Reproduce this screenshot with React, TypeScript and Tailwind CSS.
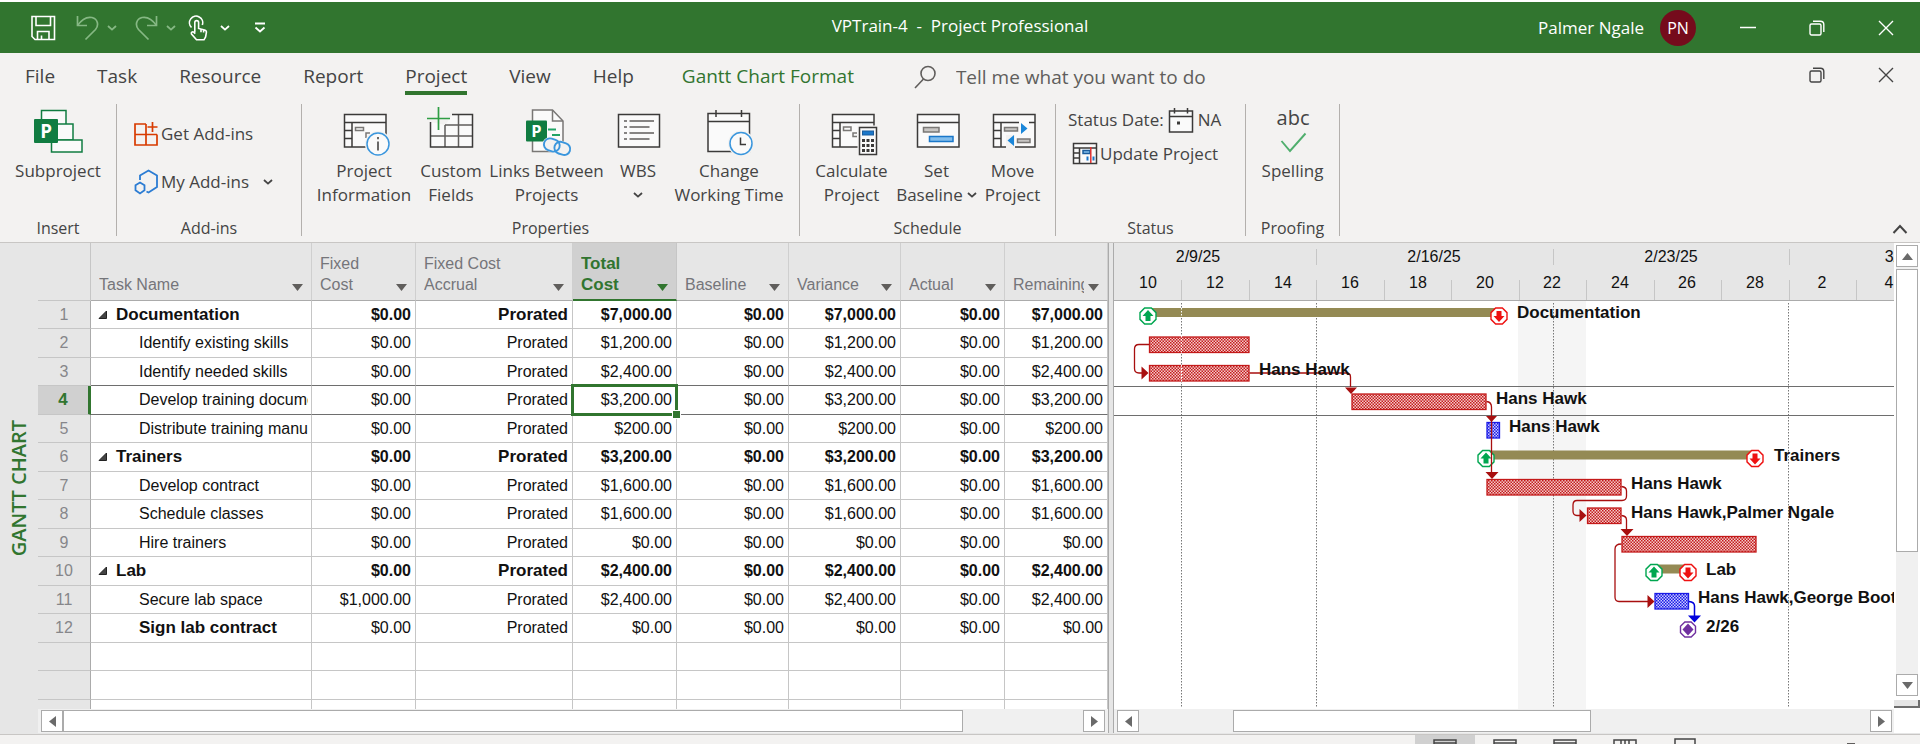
import React from "react";

const ROW = 28.5;
const ORIGIN = 1114;

/* ---------- shared small pieces ---------- */

function Chevron({ className = "" }: { className?: string }) {
  return (
    <svg width="10" height="6" viewBox="0 0 10 6" className={className} aria-hidden="true">
      <path d="M1 1l4 3.6L9 1" fill="none" stroke="currentColor" strokeWidth="1.8" />
    </svg>
  );
}

function Restore() {
  return (
    <svg width="16" height="16" viewBox="0 0 16 16" fill="none" stroke="currentColor" strokeWidth="1.4" aria-hidden="true">
      <rect x="1" y="4" width="11" height="11" rx="1.5" />
      <path d="M4 1.2h7.5a3.3 3.3 0 0 1 3.3 3.3V12" />
    </svg>
  );
}

function Close() {
  return (
    <svg width="16" height="16" viewBox="0 0 16 16" stroke="currentColor" strokeWidth="1.4" aria-hidden="true">
      <path d="M1 1l14 14M15 1L1 15" />
    </svg>
  );
}

/* ---------- title bar ---------- */

function TitleBar() {
  return (
    <header className="grid h-[53px] grid-cols-[1fr_auto_1fr] items-center border-t-2 border-white bg-[#31752f] text-white">
      <div className="flex items-center pl-[30px]">
        <button aria-label="Save" className="mr-5">
          <svg width="26" height="26" viewBox="0 0 26 26" fill="none" stroke="currentColor" strokeWidth="1.6">
            <path d="M2 1.5h22.5v23H5l-3-3z" />
            <path d="M6 1.5v9h14.500v-9M7.500 24.500v-8h11.500v8M11.500 20.500v4" />
          </svg>
        </button>
        <button aria-label="Undo" className="mr-2 text-[#86b884]">
          <svg width="23" height="26" viewBox="0 0 23 26" fill="none" stroke="currentColor" strokeWidth="1.7">
            <path d="M1.500 1v9.500H11" />
            <path d="M1.500 10.500C6 4 11 1.500 16 2.500c6 1.500 7 8 3.500 12L9.500 24.500" />
          </svg>
        </button>
        <button aria-label="Undo options" className="mr-[18px] text-[#86b884]">
          <Chevron />
        </button>
        <button aria-label="Redo" className="mr-2 text-[#86b884]">
          <svg width="23" height="26" viewBox="0 0 23 26" fill="none" stroke="currentColor" strokeWidth="1.7">
            <path d="M21.500 1v9.500H12" />
            <path d="M21.500 10.500C17 4 12 1.500 7 2.500c-6 1.500-7 8-3.500 12L13.500 24.500" />
          </svg>
        </button>
        <button aria-label="Redo options" className="mr-3 text-[#86b884]">
          <Chevron />
        </button>
        <button aria-label="Touch mode" className="mr-3">
          <svg width="20" height="26" viewBox="0 0 20 26" fill="none" stroke="currentColor" strokeWidth="1.600">
            <path d="M3.500 12.500A6.600 6.600 0 1 1 14.300 10" />
            <path d="M6.800 17.500V7.500a1.900 1.900 0 0 1 3.800 0v6l6 1.500c1.400.4 2 1 1.800 2.500l-.8 4.500-1.600 2.800H8.500L3.500 19c-.8-1.500 1-2.800 2.200-1.800l1.500 1.500M13 14.200v3M15.600 15v2.600" />
          </svg>
        </button>
        <button aria-label="Touch mode options" className="mr-6">
          <Chevron />
        </button>
        <button aria-label="Customize quick access toolbar">
          <svg width="12" height="12" viewBox="0 0 12 12" fill="none" stroke="currentColor" strokeWidth="1.8">
            <path d="M1 1.500h10M1.500 5.500L6 9.500l4.500-4" />
          </svg>
        </button>
      </div>
      <h1 className="pb-1 text-[17px] leading-6 whitespace-pre">{"VPTrain-4  -  Project Professional"}</h1>
      <div className="flex items-center justify-end pr-[26px]">
        <span className="mr-4 text-[17px]">Palmer Ngale</span>
        <span className="mr-11 flex size-9 items-center justify-center rounded-full bg-[#750b1c] text-base">PN</span>
        <button aria-label="Minimize" className="mr-[53px]">
          <svg width="16" height="16" viewBox="0 0 16 16" stroke="currentColor" strokeWidth="1.500">
            <path d="M0 7.500h16" />
          </svg>
        </button>
        <button aria-label="Restore" className="mr-[53px]">
          <Restore />
        </button>
        <button aria-label="Close">
          <Close />
        </button>
      </div>
    </header>
  );
}

/* ---------- ribbon tabs ---------- */

const tabs = ["File", "Task", "Resource", "Report", "Project", "View", "Help"];

function RibbonTabs() {
  return (
    <nav className="flex h-[47px] items-center text-[19px] leading-7 text-[#444]">
      <div className="flex items-start gap-[42px] self-start pl-[25px]">
        {tabs.map((t) => (
          <button
            key={t}
            className={
              t === "Project"
                ? "flex h-[42px] flex-col border-b-4 border-[#31752f] pt-[9px] font-medium"
                : "flex h-[42px] flex-col border-b-4 border-transparent pt-[9px]"
            }
          >
            {t}
          </button>
        ))}
        <button className="flex h-[42px] flex-col border-b-4 border-transparent pt-[9px] pl-1.5 text-[#31752f]">Gantt Chart Format</button>
      </div>
      <label className="ml-[60px] flex items-center gap-5 text-[#605e5c]">
        <svg width="22" height="24" viewBox="0 0 22 24" fill="none" stroke="currentColor" strokeWidth="1.600" aria-hidden="true">
          <circle cx="14" cy="8.500" r="7" />
          <path d="M9.500 14L1 23" />
        </svg>
        <input
          aria-label="Tell me what you want to do"
          placeholder="Tell me what you want to do"
          className="w-72 bg-transparent outline-none placeholder:text-[#605e5c]"
        />
      </label>
      <div className="ml-auto flex items-center gap-[53px] pr-[26px] pb-1 text-[#444]">
        <button aria-label="Restore document window">
          <Restore />
        </button>
        <button aria-label="Close document window">
          <Close />
        </button>
      </div>
    </nav>
  );
}

/* ---------- ribbon icons ---------- */

function Big({ children }: { children: React.ReactNode }) {
  return (
    <svg width="52" height="52" viewBox="0 0 52 52" fill="none" stroke="#3b3a39" strokeWidth="1.500" aria-hidden="true" className="mb-px shrink-0">
      {children}
    </svg>
  );
}

const PBadge = ({ x, y, s }: { x: number; y: number; s: number }) => (
  <g stroke="none">
    <rect x={x} y={y} width={s} height={s} rx="1" fill="#107c41" />
    <text x={x + s / 2} y={y + s * 0.78} textAnchor="middle" fontFamily="Open Sans" fontWeight="700" fontSize={s * 0.78} fill="#fff">
      P
    </text>
  </g>
);

const SubprojectIcon = () => (
  <Big>
    <g stroke="#107c41" fill="#fafafa">
      <rect x="9.500" y="4.500" width="24.500" height="16" />
      <rect x="24" y="18" width="17" height="16" />
      <rect x="19.500" y="34" width="30.500" height="12" />
    </g>
    <PBadge x={2} y={13} s={24} />
  </Big>
);

const Table = () => (
  <>
    <rect x="6.500" y="8.500" width="41.500" height="32.500" fill="#fafafa" />
    <path d="M6.500 16.500h41.500M14 16.500V41M6.500 24.500H14M6.500 32.500H14" />
  </>
);

const ProjectInfoIcon = () => (
  <Big>
    <Table />
    <path d="M17.500 21.500h8v3h-8zM28 32v-5h4" stroke="#797775" />
    <circle cx="40" cy="38" r="13" fill="#f3f2f1" stroke="none" />
    <circle cx="40" cy="38" r="11" fill="#fafafa" stroke="#3a96dd" />
    <path d="M40 35.500v9M40 31v2.200" />
  </Big>
);

const CustomFieldsIcon = () => (
  <Big>
    <path d="M27 8.500h20.500V41H5.500V16l15 3z" fill="#fafafa" stroke="none" />
    <path d="M20 19h27M20 19v22M33.500 8.500V41M5.500 30h42" stroke="#605e5c" />
    <path d="M27 8.500h20.500V41H5.500V16" />
    <path d="M13.500 1v23M2 12.500h23" stroke="#2f9e44" strokeWidth="1.700" />
  </Big>
);

const LinksIcon = () => (
  <Big>
    <path d="M11.500 4h20L42 15v30.500H11.500z" fill="#fafafa" stroke="#797775" />
    <path d="M31.500 4v11H42" stroke="#797775" />
    <path d="M27 23.500h8M31 29h8" stroke="#21a366" strokeWidth="2" />
    <PBadge x={5} y={14.500} s={21} />
    <g transform="rotate(18 37 41)">
      <rect x="21" y="34" width="31" height="14" rx="7" fill="#f3f2f1" stroke="none" />
      <rect x="22.500" y="35" width="16" height="12" rx="6" stroke="#3a96dd" strokeWidth="1.900" />
      <rect x="33.500" y="35" width="16" height="12" rx="6" stroke="#3a96dd" strokeWidth="1.900" />
    </g>
  </Big>
);

const WbsIcon = () => (
  <Big>
    <rect x="6.500" y="8.500" width="41" height="32.500" fill="#fafafa" />
    <path d="M12 15h3M17.500 15h24.500M12 21h3M17.500 21h20M12 27h3M17.500 27h24.500M12 33h3M17.500 33h20" stroke="#605e5c" />
  </Big>
);

const CalendarClockIcon = () => (
  <Big>
    <rect x="5" y="7.500" width="41.500" height="38" fill="#fafafa" />
    <path d="M5 15.500h41.500M13 4v7M38.500 4v7" />
    <circle cx="38" cy="37.500" r="13" fill="#f3f2f1" stroke="none" />
    <circle cx="38" cy="37.500" r="11" fill="#fafafa" stroke="#3a96dd" />
    <path d="M37.500 31.500V38.500H43" />
  </Big>
);

const CalculateIcon = () => (
  <Big>
    <Table />
    <path d="M17.500 21h7.500v3.500h-7.500zM31 27h-4v3.500h4" stroke="#797775" />
    <rect x="31.500" y="19.500" width="20.500" height="31" fill="#f3f2f1" stroke="none" />
    <rect x="33.500" y="21.500" width="17" height="27" fill="#fafafa" />
    <rect x="36.500" y="25" width="11" height="4" fill="#1a77c9" stroke="#1a5c9c" strokeWidth="1" />
    <g fill="#3b3a39" stroke="none">
      {[33, 38, 43].map((y) => [36, 40.5, 45].map((x) => <rect key={`${x}-${y}`} x={x} y={y} width="3" height="3" />))}
    </g>
  </Big>
);

const BaselineIcon = () => (
  <Big>
    <rect x="6.500" y="8.500" width="41.500" height="32.500" fill="#fafafa" />
    <path d="M6.500 16.500h41.500" />
    <rect x="12.500" y="21.500" width="15.500" height="4.500" fill="#c8c6c4" stroke="#797775" />
    <rect x="18.500" y="30.500" width="23.500" height="5" fill="#83beec" stroke="#1a77c9" />
  </Big>
);

const MoveIcon = () => (
  <Big>
    <Table />
    <rect x="32" y="15" width="10" height="15" fill="#fafafa" stroke="none" />
    <rect x="19" y="29" width="9" height="13" fill="#f3f2f1" stroke="none" />
    <rect x="17.500" y="21.500" width="13" height="3.500" fill="#c8c6c4" stroke="#797775" />
    <rect x="30.500" y="33" width="12.500" height="3.500" fill="#c8c6c4" stroke="#797775" />
    <path d="M34 17l6.500 5.500L34 28zM27 29l-6.500 5.500L27 40z" fill="#1a86d9" stroke="none" />
  </Big>
);

const GetAddinsIcon = () => (
  <svg width="26" height="26" viewBox="0 0 26 26" fill="none" stroke="#d83b01" strokeWidth="1.700" aria-hidden="true">
    <path d="M13 3H2v21h22V13.500M2 13.500h22M13 3v21M19.500 1v10M14.500 6h10" />
  </svg>
);

const MyAddinsIcon = () => (
  <svg width="26" height="26" viewBox="0 0 26 26" fill="none" stroke="#2b7cd3" strokeWidth="1.800" aria-hidden="true">
    <path d="M7 11V6.500l8.500-5L24 6.500v11.500l-8.500 5.500-2-1" />
    <path d="M7 13.500l4.500 2.800v5L7 24.500l-4.500-3.200v-5z" />
  </svg>
);

const DateIcon = () => (
  <svg width="26" height="26" viewBox="0 0 26 26" fill="none" stroke="#3b3a39" strokeWidth="1.500" aria-hidden="true">
    <rect x="1.500" y="4" width="23" height="21" fill="#fafafa" />
    <path d="M1.500 9.500h23M6.500 1v5.500M19.500 1v5.500" />
    <rect x="9" y="14.500" width="3" height="3" fill="#3b3a39" stroke="none" />
  </svg>
);

const UpdateIcon = () => (
  <svg width="26" height="24" viewBox="0 0 26 24" fill="none" stroke="#3b3a39" strokeWidth="1.500" aria-hidden="true">
    <rect x="1.500" y="1.500" width="23" height="20" fill="#fafafa" />
    <path d="M1.500 6h23M7.500 6v15.500M1.500 11h6M1.500 16h6" />
    <rect x="11" y="8.500" width="7" height="3" fill="#83beec" stroke="#1a5c9c" />
    <path d="M15.500 14.500v4M21.500 14.500v4" stroke="#1a77c9" strokeWidth="2" />
    <path d="M18.800 5v16" stroke="#e03030" />
  </svg>
);

const SpellingIcon = () => (
  <Big>
    <text x="26" y="19" textAnchor="middle" fontFamily="Open Sans" fontSize="20" fill="#444" stroke="none">
      abc
    </text>
    <path d="M14.500 35l8.500 10L38.500 27.500" stroke="#4fae6d" strokeWidth="1.900" />
  </Big>
);

/* ---------- ribbon ---------- */

function BigButton({ icon, lines, className, drop }: { icon: React.ReactNode; lines: string[]; className: string; drop?: boolean }) {
  return (
    <button className={`flex flex-col items-center whitespace-nowrap ${className}`}>
      {icon}
      {lines.map((l, i) => (
        <span key={l} className="flex h-6 items-center gap-1">
          {l}
          {drop && lines.length > 1 && i === lines.length - 1 && <Chevron />}
        </span>
      ))}
      {drop && lines.length === 1 && (
        <span className="flex h-6 items-center">
          <Chevron />
        </span>
      )}
    </button>
  );
}

function Group({ title, className, children }: { title: string; className: string; children: React.ReactNode }) {
  return (
    <section aria-label={title} className={`flex h-[132px] shrink-0 flex-col border-r border-[#b3b0ad] pt-0.5 ${className}`}>
      <div className="flex flex-1 justify-center">{children}</div>
      <h2 className="text-center text-base leading-4">{title}</h2>
    </section>
  );
}

function Ribbon() {
  return (
    <div className="flex items-center border-b border-[#c8c6c4] pt-1 pb-1.5 text-[17px] text-[#444]">
      <Group title="Insert" className="w-[117px]">
        <BigButton icon={<SubprojectIcon />} lines={["Subproject"]} className="w-28" />
      </Group>
      <Group title="Add-ins" className="w-[185px]">
        <div className="flex flex-1 flex-col gap-6 pt-4 pl-4">
          <button className="flex h-6 items-center gap-0.5">
            <GetAddinsIcon />
            Get Add-ins
          </button>
          <button className="flex h-6 items-center gap-0.5">
            <MyAddinsIcon />
            My Add-ins
            <Chevron className="ml-3" />
          </button>
        </div>
      </Group>
      <Group title="Properties" className="w-[498px]">
        <BigButton icon={<ProjectInfoIcon />} lines={["Project", "Information"]} className="w-[104px]" />
        <BigButton icon={<CustomFieldsIcon />} lines={["Custom", "Fields"]} className="w-[70px]" />
        <BigButton icon={<LinksIcon />} lines={["Links Between", "Projects"]} className="w-[121px]" />
        <BigButton icon={<WbsIcon />} lines={["WBS"]} drop className="w-[62px]" />
        <BigButton icon={<CalendarClockIcon />} lines={["Change", "Working Time"]} className="w-[120px]" />
      </Group>
      <Group title="Schedule" className="w-64">
        <BigButton icon={<CalculateIcon />} lines={["Calculate", "Project"]} className="w-[82px]" />
        <BigButton icon={<BaselineIcon />} lines={["Set", "Baseline"]} drop className="w-[88px]" />
        <BigButton icon={<MoveIcon />} lines={["Move", "Project"]} className="w-16" />
      </Group>
      <Group title="Status" className="w-[190px]">
        <div className="flex flex-1 flex-col gap-1.5 pl-3">
          <button className="flex h-7 items-center gap-1 whitespace-nowrap">
            Status Date: <DateIcon /> NA
          </button>
          <button className="flex h-7 items-center gap-0.5 pl-1 whitespace-nowrap">
            <UpdateIcon />
            Update Project
          </button>
        </div>
      </Group>
      <Group title="Proofing" className="w-[94px]">
        <BigButton icon={<SpellingIcon />} lines={["Spelling"]} className="w-20" />
      </Group>
      <button aria-label="Collapse the ribbon" className="mr-3 ml-auto self-end">
        <svg width="16" height="14" viewBox="0 0 16 14" fill="none" stroke="#444" strokeWidth="2">
          <path d="M1.500 11L8 4l6.500 7" />
        </svg>
      </button>
    </div>
  );
}

/* ---------- task table ---------- */

type Task = { name: string; level: 0 | 1; boldName?: boolean; fixed: string; cost: string };

const tasks: Task[] = [
  { name: "Documentation", level: 0, fixed: "$0.00", cost: "$7,000.00" },
  { name: "Identify existing skills", level: 1, fixed: "$0.00", cost: "$1,200.00" },
  { name: "Identify needed skills", level: 1, fixed: "$0.00", cost: "$2,400.00" },
  { name: "Develop training documents", level: 1, fixed: "$0.00", cost: "$3,200.00" },
  { name: "Distribute training manuals", level: 1, fixed: "$0.00", cost: "$200.00" },
  { name: "Trainers", level: 0, fixed: "$0.00", cost: "$3,200.00" },
  { name: "Develop contract", level: 1, fixed: "$0.00", cost: "$1,600.00" },
  { name: "Schedule classes", level: 1, fixed: "$0.00", cost: "$1,600.00" },
  { name: "Hire trainers", level: 1, fixed: "$0.00", cost: "$0.00" },
  { name: "Lab", level: 0, fixed: "$0.00", cost: "$2,400.00" },
  { name: "Secure lab space", level: 1, fixed: "$1,000.00", cost: "$2,400.00" },
  { name: "Sign lab contract", level: 1, boldName: true, fixed: "$0.00", cost: "$0.00" },
];

const columns: { lines: string[]; width: string }[] = [
  { lines: ["Task Name"], width: "w-[221px]" },
  { lines: ["Fixed", "Cost"], width: "w-[104px]" },
  { lines: ["Fixed Cost", "Accrual"], width: "w-[157px]" },
  { lines: ["Total", "Cost"], width: "w-[104px]" },
  { lines: ["Baseline"], width: "w-28" },
  { lines: ["Variance"], width: "w-28" },
  { lines: ["Actual"], width: "w-[104px]" },
  { lines: ["Remaining"], width: "w-[103px]" },
];

function TaskTable() {
  return (
    <table className="w-[1070px] table-fixed border-separate border-spacing-0 font-['Liberation_Sans',sans-serif] text-base leading-5 text-[#111]">
      <thead>
        <tr>
          <th aria-label="Row number" className="h-[58px] w-[53px] border-r border-b border-[#c6c6c6] bg-[#e6e6e6] p-0" />
          {columns.map((c) => {
            const active = c.lines[0] === "Total";
            return (
              <th
                key={c.lines.join(" ")}
                scope="col"
                className={`h-[58px] ${c.width} border-r p-0 align-bottom ${
                  active
                    ? "border-b-2 border-r-[#c6c6c6] border-b-[#31752f] bg-[#d0d0d0] text-[17px] font-bold text-[#31752f]"
                    : "border-b border-r-[#cfcfcf] border-b-[#ababab] bg-[#e6e6e6] font-normal text-[#75757a]"
                }`}
              >
                <div className={`flex items-end gap-1 pr-2 pl-2 text-left leading-[21px] ${active ? "pb-1" : "pb-[5px]"}`}>
                  <span className="min-w-0 flex-1 overflow-hidden">
                    {c.lines.map((l) => (
                      <span key={l} className="block whitespace-nowrap">
                        {l}
                      </span>
                    ))}
                  </span>
                  <button aria-label={`Filter ${c.lines.join(" ")}`} className="flex h-4 items-center">
                    <svg width="11" height="7" viewBox="0 0 11 7">
                      <path d="M0 0h11L5.500 7z" fill={active ? "#31752f" : "#605e5c"} />
                    </svg>
                  </button>
                </div>
              </th>
            );
          })}
        </tr>
      </thead>
      <tbody>
        {Array.from({ length: 15 }, (_, i) => {
          const t = tasks[i];
          const summary = t?.level === 0;
          const selected = i === 3;
          const line = i === 2 || selected ? "border-b-[#6e6e6e]" : "border-b-[#c6c6c6]";
          const values = t ? [t.fixed, "Prorated", t.cost, "$0.00", t.cost, "$0.00", t.cost] : Array(7).fill("");
          return (
            <tr key={i} className="odd:h-7 even:h-[29px]">
              <th
                scope="row"
                className={
                  selected
                    ? "border-r-[3px] border-b border-r-[#31752f] border-b-[#c6c6c6] bg-[#d0d0d0] p-0 text-[17px] font-bold text-[#31752f]"
                    : "border-r border-b border-r-[#ababab] border-b-[#c6c6c6] bg-[#e6e6e6] p-0 font-normal text-[#86868a]"
                }
              >
                {t ? i + 1 : ""}
              </th>
              <td className={`border-r border-b border-r-[#c6c6c6] bg-white p-0 pr-[3px] ${line}`}>
                {t && (
                  <div
                    className={`flex items-center gap-2 overflow-hidden whitespace-nowrap ${summary ? "pl-[7px]" : "pl-12"} ${
                      summary || t.boldName ? "text-[17px] font-bold" : ""
                    }`}
                  >
                    {summary && (
                      <button aria-label={`Collapse ${t.name}`} className="flex">
                        <svg width="10" height="10" viewBox="0 0 10 10">
                          <path d="M8.500 1v7.500H1z" fill="#444" stroke="#222" />
                        </svg>
                      </button>
                    )}
                    <span>{t.name}</span>
                  </div>
                )}
              </td>
              {values.map((v, j) => (
                <td
                  key={j}
                  className={`border-r border-b border-r-[#c6c6c6] bg-white p-0 pr-1 text-right ${line} ${
                    selected && j === 2 ? "relative" : ""
                  } ${summary ? "font-bold" : ""} ${summary && j === 1 ? "text-[17px]" : ""}`}
                >
                  {v}
                  {selected && j === 2 && (
                    <span className="absolute -inset-[2px] border-[3px] border-[#31752f]">
                      <span className="absolute -right-[6px] -bottom-[6px] size-[9px] border border-white bg-[#31752f]" />
                    </span>
                  )}
                </td>
              ))}
            </tr>
          );
        })}
      </tbody>
    </table>
  );
}

/* ---------- scroll bars ---------- */

const arrows = {
  left: "M7 0v11L0 5.500z",
  right: "M0 0v11l7-5.500z",
  up: "M0 7h11L5.500 0z",
  down: "M0 0h11L5.500 7z",
};

function ScrollButton({ dir }: { dir: keyof typeof arrows }) {
  const horizontal = dir === "left" || dir === "right";
  return (
    <button aria-label={`Scroll ${dir}`} className="flex size-[22px] shrink-0 items-center justify-center border border-[#ababab] bg-white">
      <svg width={horizontal ? 7 : 11} height={horizontal ? 11 : 7}>
        <path d={arrows[dir]} fill="#6a6a6a" />
      </svg>
    </button>
  );
}

/* ---------- gantt chart ---------- */

const days = ["10", "12", "14", "16", "18", "20", "22", "24", "26", "28", "2", "4"];
const weeks = [
  { label: "2/9/25", x: 84 },
  { label: "2/16/25", x: 320 },
  { label: "2/23/25", x: 557 },
  { label: "3/2/25", x: 793 },
];

type Bar = { row: number; from: number; to: number; kind: "summary" | "critical" | "normal"; label?: string; labelX?: number };

const bars: Bar[] = [
  { row: 0, from: 1148, to: 1499, kind: "summary", label: "Documentation", labelX: 1517 },
  { row: 1, from: 1149.5, to: 1249, kind: "critical" },
  { row: 2, from: 1149.5, to: 1249, kind: "critical", label: "Hans Hawk", labelX: 1259 },
  { row: 3, from: 1352, to: 1486, kind: "critical", label: "Hans Hawk", labelX: 1496 },
  { row: 4, from: 1487, to: 1499.5, kind: "normal", label: "Hans Hawk", labelX: 1509 },
  { row: 5, from: 1486, to: 1755, kind: "summary", label: "Trainers", labelX: 1774 },
  { row: 6, from: 1487, to: 1621, kind: "critical", label: "Hans Hawk", labelX: 1631 },
  { row: 7, from: 1587.5, to: 1621, kind: "critical", label: "Hans Hawk,Palmer Ngale", labelX: 1631 },
  { row: 8, from: 1622, to: 1756, kind: "critical" },
  { row: 9, from: 1654, to: 1688, kind: "summary", label: "Lab", labelX: 1706 },
  { row: 10, from: 1655, to: 1688.5, kind: "normal", label: "Hans Hawk,George Booth", labelX: 1698 },
];

const labels = [...bars.filter((b) => b.label).map((b) => ({ row: b.row, text: b.label!, x: b.labelX! })), { row: 11, text: "2/26", x: 1706 }];

const octagon = (cx: number, cy: number, r: number) => {
  const k = r * 0.42;
  return `M${cx - k} ${cy - r}H${cx + k}L${cx + r} ${cy - k}V${cy + k}L${cx + k} ${cy + r}H${cx - k}L${cx - r} ${cy + k}V${cy - k}Z`;
};

function Marker({ x, y, up }: { x: number; y: number; up: boolean }) {
  const c = up ? "#00a650" : "#ee1111";
  const s = up ? 1 : -1;
  return (
    <g>
      <path d={octagon(x, y, 8)} fill="#fff" stroke={c} strokeWidth="1.400" />
      <path d={`M${x} ${y - 6 * s}L${x + 5.500} ${y}H${x + 2.500}V${y + 5 * s}H${x - 2.500}V${y}H${x - 5.500}Z`} fill={c} />
    </g>
  );
}

function Chart() {
  return (
    <svg width="780" height="409" viewBox={`${ORIGIN} 301 780 409`} className="absolute top-0 left-0" aria-hidden="true">
      <defs>
        <pattern id="red" width="3" height="3" patternUnits="userSpaceOnUse">
          <rect width="3" height="3" fill="#f3cccc" />
          <path d="M0 0h1.500v1.500H0zM1.500 1.500H3V3H1.500z" fill="#c41a1a" />
        </pattern>
        <pattern id="blue" width="3" height="3" patternUnits="userSpaceOnUse">
          <rect width="3" height="3" fill="#ccccff" />
          <path d="M0 0h1.500v1.500H0zM1.500 1.500H3V3H1.500z" fill="#1a1ae6" />
        </pattern>
      </defs>
      <rect x="1518" y="301" width="68" height="409" fill="#f5f5f5" />
      <g stroke="#777" strokeDasharray="1.500 1.500">
        {[1181.5, 1316.5, 1553.5, 1788.5].map((x) => (
          <path key={x} d={`M${x} 303V708`} />
        ))}
      </g>
      <path d="M1114 386.500H1894M1114 415.500H1894" stroke="#6e6e6e" />
      {bars.map((b) => {
        const y = 301 + b.row * ROW + 7;
        if (b.kind === "summary") return <rect key={b.row} x={b.from} y={y} width={b.to - b.from} height="9" fill="#948a54" />;
        const red = b.kind === "critical";
        return (
          <rect
            key={b.row}
            x={b.from}
            y={y + 0.5}
            width={b.to - b.from}
            height="15.500"
            fill={red ? "url(#red)" : "url(#blue)"}
            stroke={red ? "#c41a1a" : "#1a1ae6"}
            strokeWidth="1.300"
          />
        );
      })}
      <path d="M1181.500 308V318M1181.500 336V353M1181.500 365V382" stroke="#fff" strokeDasharray="1.500 1.500" />
      {bars
        .filter((b) => b.kind === "summary")
        .map((b) => {
          const y = 316 + b.row * ROW;
          return (
            <g key={b.row}>
              <Marker x={b.from} y={y} up />
              <Marker x={b.to} y={y} up={false} />
            </g>
          );
        })}
      <g fill="none" stroke="#a80f0f" strokeWidth="1.300">
        <path d="M1149 344.500H1139Q1134.500 344.500 1134.500 349V368.500Q1134.500 373 1139 373H1142" />
        <path d="M1249.500 373H1346.500Q1350.500 373 1350.500 377V387" />
        <path d="M1486.500 401.500Q1491.500 402 1491.500 407V473" />
        <path d="M1621.500 486.500Q1626.500 487 1626.500 491V496Q1626.500 500.500 1622 500.500H1577Q1573 500.500 1573 505V511Q1573 515.500 1577 515.500H1580" />
        <path d="M1621.500 515.500Q1626.500 516 1626.500 520V529" />
        <path d="M1621.500 544Q1615 544 1615 549V597Q1615 601.500 1619 601.500H1648" />
      </g>
      <path
        d="M1141.500 366.500v13l7-6.500zM1345 387.500h12l-6 6.500zM1486 416h11l-5.500 6zM1485.500 472h13l-6.500 7zM1579.500 509v13l7-6.500zM1620.500 529h13l-6.500 7zM1647.500 595v13l7-6.500z"
        fill="#a80f0f"
      />
      <path d="M1689 601.500Q1694.500 602 1694.500 606V616" fill="none" stroke="#0000dc" strokeWidth="1.500" />
      <path d="M1688 615.500h13l-6.500 7z" fill="#0000dc" />
      <path d={octagon(1688, 629.5, 7.5)} fill="#fff" stroke="#7030a0" strokeWidth="1.400" />
      <path d="M1688 623.500l5.500 6-5.500 6-5.500-6z" fill="#7030a0" />
    </svg>
  );
}

function Gantt() {
  return (
    <div className="relative h-full overflow-hidden font-['Liberation_Sans',sans-serif] text-base text-[#111]">
      <div className="relative h-[58px] overflow-hidden border-b border-[#ababab] bg-[#e6e6e6] leading-5">
        {weeks.map((w) => (
          <span key={w.label} className="absolute top-1 w-20 -translate-x-1/2 text-center" style={{ left: w.x }}>
            {w.label}
          </span>
        ))}
        {[202, 439, 675].map((x) => (
          <span key={x} className="absolute top-1.5 h-4 w-px bg-[#c6c6c6]" style={{ left: x }} />
        ))}
        {days.map((d, i) => (
          <span key={d + i} className="absolute top-[30px] w-10 -translate-x-1/2 text-center" style={{ left: Math.round(34 + i * 67.4) }}>
            {d}
          </span>
        ))}
        {days.map((d, i) => (
          <span key={d + i} className="absolute bottom-0 h-5 w-px bg-[#c6c6c6]" style={{ left: Math.round(67 + i * 67.5) }} />
        ))}
      </div>
      <div className="relative h-[409px]">
        <Chart />
        {labels.map((l) => (
          <span
            key={l.row}
            className="absolute text-[17px] leading-6 font-bold whitespace-nowrap"
            style={{ left: l.x - ORIGIN, top: Math.round(l.row * ROW) }}
          >
            {l.text}
          </span>
        ))}
      </div>
    </div>
  );
}

/* ---------- status bar ---------- */

function ViewIcon({ children }: { children?: React.ReactNode }) {
  return (
    <svg width="24" height="16" viewBox="0 0 24 16" fill="none" stroke="#444" strokeWidth="1.500" aria-hidden="true">
      <rect x="1" y="1" width="22" height="14" />
      {children}
    </svg>
  );
}

function StatusBar() {
  return (
    <footer className="flex h-[10px] shrink-0 items-start justify-end overflow-hidden border-t border-[#c8c6c4] bg-[#f3f2f1] pr-[65px]">
      <button aria-label="Gantt Chart view" className="flex h-6 w-[60px] justify-center bg-[#d0d0d0] pt-1">
        <ViewIcon>
          <path d="M1 4h22" />
        </ViewIcon>
      </button>
      <button aria-label="Task Usage view" className="flex h-6 w-[60px] justify-center pt-1">
        <ViewIcon>
          <path d="M1 4h22" />
        </ViewIcon>
      </button>
      <button aria-label="Team Planner view" className="flex h-6 w-[60px] justify-center pt-1">
        <ViewIcon>
          <path d="M1 4h22" />
        </ViewIcon>
      </button>
      <button aria-label="Resource Sheet view" className="flex h-6 w-[60px] justify-center pt-1">
        <ViewIcon>
          <path d="M8 1v14M12 1v14M16 1v14" />
        </ViewIcon>
      </button>
      <button aria-label="Report view" className="flex h-6 w-[60px] justify-center pt-[3px]">
        <svg width="22" height="16" viewBox="0 0 22 16" fill="none" stroke="#444" strokeWidth="1.500" aria-hidden="true">
          <rect x="1" y="1" width="20" height="14" />
        </svg>
      </button>
      <span className="mt-2 ml-[132px] h-3 w-2 bg-[#605e5c]" />
    </footer>
  );
}

/* ---------- page ---------- */

export default function App() {
  return (
    <div className="flex h-screen flex-col overflow-hidden bg-[#f3f2f1] font-['Open_Sans','Noto_Sans',sans-serif]">
      <TitleBar />
      <RibbonTabs />
      <Ribbon />
      <main className="flex min-h-0 flex-1 border-b border-[#e6e6e6] bg-[#e6e6e6]">
        <div className="flex w-[38px] shrink-0 items-center justify-center">
          <span className="rotate-180 text-xl leading-6 font-semibold whitespace-nowrap text-[#31752f] [writing-mode:vertical-rl]">
            GANTT CHART
          </span>
        </div>
        <div className="flex w-[1070px] shrink-0 flex-col">
          <div className="min-h-0 flex-1 overflow-hidden bg-white">
            <TaskTable />
          </div>
          <div className="flex h-6 items-center bg-[#f0f0f0] pr-[3px] pl-[3px]">
            <ScrollButton dir="left" />
            <div className="h-[22px] w-[900px] border border-[#ababab] bg-white" />
            <div className="flex-1" />
            <ScrollButton dir="right" />
          </div>
        </div>
        <div className="w-1.5 shrink-0 border-r border-l border-[#ababab] bg-[#e6e6e6]" />
        <div className="flex min-w-0 flex-1 flex-col bg-white">
          <div className="min-h-0 flex-1 overflow-hidden">
            <Gantt />
          </div>
          <div className="flex h-6 items-center bg-[#f0f0f0] pr-0.5 pl-[3px]">
            <ScrollButton dir="left" />
            <div className="ml-[94px] h-[22px] w-[358px] border border-[#ababab] bg-white" />
            <div className="flex-1" />
            <ScrollButton dir="right" />
          </div>
        </div>
        <div className="flex w-[26px] shrink-0 flex-col bg-white">
          <div className="mx-auto mt-0.5 flex min-h-0 flex-1 flex-col bg-[#f0f0f0]">
            <ScrollButton dir="up" />
            <div className="mt-0.5 h-[283px] w-[22px] border border-[#ababab] bg-white" />
            <div className="flex-1" />
            <ScrollButton dir="down" />
          </div>
          <div className="mt-1 mb-[25px] h-2 border-r-2 border-b-2 border-[#6e6e6e] bg-[#e6e6e6]" />
        </div>
      </main>
      <StatusBar />
    </div>
  );
}
